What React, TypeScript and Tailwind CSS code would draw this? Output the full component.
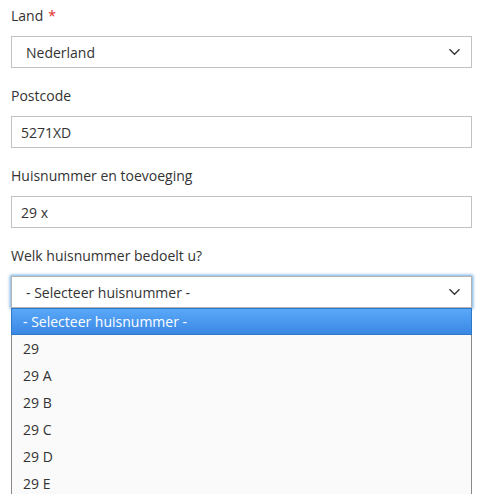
import React from 'react';

const font = { fontFamily: '"Open Sans", "Noto Sans", sans-serif' };

function Chevron() {
  return (
    <svg width="11" height="7" viewBox="0 0 11 7" className="absolute right-[11px] top-1/2 -translate-y-1/2">
      <polyline points="0.5,0.8 5.5,5.8 10.5,0.8" fill="none" stroke="#333" strokeWidth="1.3" />
    </svg>
  );
}

function Label({ children, required }: { children: React.ReactNode; required?: boolean }) {
  return (
    <div className="h-5 mb-[10px] text-[14px] leading-5 text-[#333]">
      {children}
      {required && <span className="ml-[5px] text-[#e02b27]">*</span>}
    </div>
  );
}

const options = ['29', '29 A', '29 B', '29 C', '29 D', '29 E'];

export default function App() {
  return (
    <div className="h-[494px] overflow-hidden bg-white" style={font}>
      <div className="ml-[11px] w-[461px] pt-[6px]">
        <div className="mb-[18px]">
          <Label required>Land</Label>
          <div className="relative h-8 border border-[#c2c2c2] bg-white pl-[14px] flex items-center text-[14px] text-[#333]">
            Nederland
            <Chevron />
          </div>
        </div>
        <div className="mb-[18px]">
          <Label>Postcode</Label>
          <div className="h-8 border border-[#c2c2c2] bg-white pl-[9px] flex items-center text-[14px] text-[#333]">
            5271XD
          </div>
        </div>
        <div className="mb-[18px]">
          <Label>Huisnummer en toevoeging</Label>
          <div className="h-8 border border-[#c2c2c2] bg-white pl-[9px] flex items-center text-[14px] text-[#333]">
            29 x
          </div>
        </div>
        <div className="relative">
          <Label>Welk huisnummer bedoelt u?</Label>
          <div className="relative h-8 border border-[#b4b4b4] bg-white pl-[14px] flex items-center text-[14px] text-[#333] shadow-[0_0_3px_1px_#68a8e0]">
            - Selecteer huisnummer -
            <Chevron />
          </div>
          <div className="absolute left-0 right-0 top-[62px] border-l border-r border-[#8a8a8a] bg-[#fafafa] text-[14px]">
            <div className="h-[27px] flex items-center pl-[11px] text-white border border-[#2f78c8] bg-gradient-to-b from-[#5aa8f8] to-[#3a88e4] -mx-px">
              - Selecteer huisnummer -
            </div>
            {options.map((o) => (
              <div key={o} className="h-[27px] flex items-center pl-[11px] text-[#333]">
                {o}
              </div>
            ))}
          </div>
        </div>
      </div>
    </div>
  );
}
